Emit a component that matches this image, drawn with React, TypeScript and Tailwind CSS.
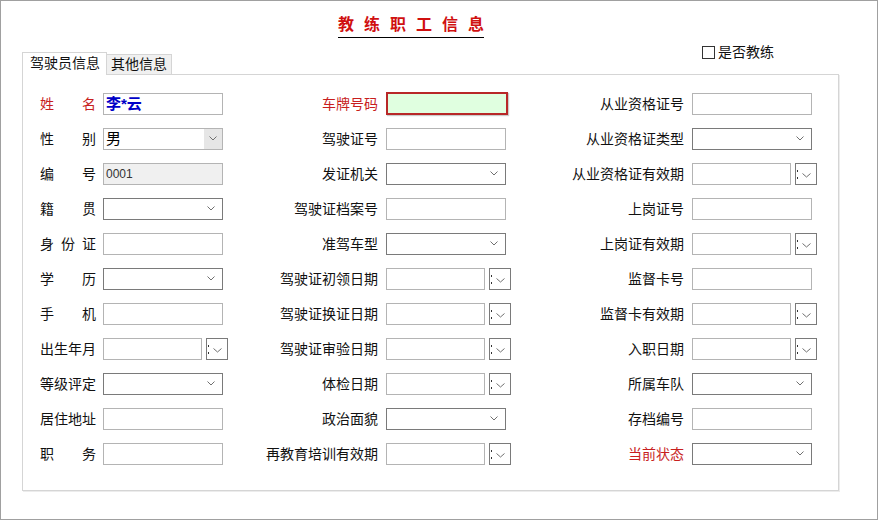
type Kind = "text" | "select" | "date" | "name" | "sex" | "code" | "plate";

type Field = { label: string; kind: Kind; red?: boolean };

const col1: Field[] = [
  { label: "姓名", kind: "name", red: true },
  { label: "性别", kind: "sex" },
  { label: "编号", kind: "code" },
  { label: "籍贯", kind: "select" },
  { label: "身份证", kind: "text" },
  { label: "学历", kind: "select" },
  { label: "手机", kind: "text" },
  { label: "出生年月", kind: "date" },
  { label: "等级评定", kind: "select" },
  { label: "居住地址", kind: "text" },
  { label: "职务", kind: "text" },
];

const col2: Field[] = [
  { label: "车牌号码", kind: "plate", red: true },
  { label: "驾驶证号", kind: "text" },
  { label: "发证机关", kind: "select" },
  { label: "驾驶证档案号", kind: "text" },
  { label: "准驾车型", kind: "select" },
  { label: "驾驶证初领日期", kind: "date" },
  { label: "驾驶证换证日期", kind: "date" },
  { label: "驾驶证审验日期", kind: "date" },
  { label: "体检日期", kind: "date" },
  { label: "政治面貌", kind: "select" },
  { label: "再教育培训有效期", kind: "date" },
];

const col3: Field[] = [
  { label: "从业资格证号", kind: "text" },
  { label: "从业资格证类型", kind: "select" },
  { label: "从业资格证有效期", kind: "date" },
  { label: "上岗证号", kind: "text" },
  { label: "上岗证有效期", kind: "date" },
  { label: "监督卡号", kind: "text" },
  { label: "监督卡有效期", kind: "date" },
  { label: "入职日期", kind: "date" },
  { label: "所属车队", kind: "select" },
  { label: "存档编号", kind: "text" },
  { label: "当前状态", kind: "select", red: true },
];

function Chevron() {
  return (
    <svg width="8" height="5" viewBox="0 0 8 5" className="shrink-0">
      <path d="M0.5 0.5 L4 4 L7.5 0.5" stroke="#707070" strokeWidth="1" fill="none" />
    </svg>
  );
}

function Input({ kind }: { kind: Kind }) {
  if (kind === "name")
    return (
      <div className="w-[120px] h-[22px] border border-[#b4b4b4] bg-white pl-[2px] text-[15px] leading-[20px] font-bold text-[#0000c8]">
        李*云
      </div>
    );
  if (kind === "sex")
    return (
      <div className="w-[120px] h-[22px] border border-[#b4b4b4] bg-white flex">
        <span className="flex-1 pl-[2px] text-[15px] leading-[20px] text-black">男</span>
        <span className="w-[18px] bg-[#e6e6e6] flex items-center justify-center">
          <Chevron />
        </span>
      </div>
    );
  if (kind === "code")
    return (
      <div className="w-[120px] h-[22px] border border-[#b4b4b4] bg-[#f0f0f0] pl-[2px] text-[12px] leading-[20px] text-[#333]">
        0001
      </div>
    );
  if (kind === "plate")
    return (
      <div className="w-[122px] h-[23px] border-2 border-[#b82828] bg-[#e0ffe0] shadow-[1px_1px_1px_rgba(0,0,0,0.2)]" />
    );
  if (kind === "select")
    return (
      <div className="w-[120px] h-[22px] border border-[#7a7a7a] bg-white flex items-center justify-end pr-[7px]">
        <Chevron />
      </div>
    );
  if (kind === "date")
    return (
      <div className="flex items-center gap-[4px]">
        <div className="w-[99px] h-[22px] border border-[#b4b4b4] bg-white" />
        <div className="w-[22px] h-[22px] border border-[#7a7a7a] bg-white">
          <svg width="20" height="20" viewBox="0 0 20 20">
            <rect x="1" y="6" width="1" height="2" fill="#333" />
            <rect x="1" y="13" width="1" height="2" fill="#333" />
            <path d="M6.5 9.5 L10.5 13 L14.5 9.5" stroke="#707070" strokeWidth="1" fill="none" />
          </svg>
        </div>
      </div>
    );
  return <div className="w-[120px] h-[22px] border border-[#b4b4b4] bg-white" />;
}

function Row1({ f }: { f: Field }) {
  return (
    <div className="h-[35px] flex items-center gap-[7px]">
      <div
        className={`w-[56px] flex justify-between text-[14px] leading-[22px] ${
          f.red ? "text-[#c81e1e]" : "text-[#111]"
        }`}
      >
        {f.label.split("").map((c, i) => (
          <span key={i}>{c}</span>
        ))}
      </div>
      <Input kind={f.kind} />
    </div>
  );
}

function Row({ f }: { f: Field }) {
  return (
    <div className="h-[35px] flex items-center gap-[8px]">
      <div
        className={`w-[118px] text-right text-[14px] leading-[22px] whitespace-nowrap ${
          f.red ? "text-[#c81e1e]" : "text-[#111]"
        }`}
      >
        {f.label}
      </div>
      <Input kind={f.kind} />
    </div>
  );
}

export default function App() {
  return (
    <div className="w-[880px] h-[520px] bg-white font-['Liberation_Sans','Noto_Sans_CJK_SC',sans-serif]">
      <div className="w-[878px] h-[520px] border border-[#a0a0a0] flex flex-col">
        {/* title */}
        <div className="h-[45px] pl-[337px] pt-[12px]">
          <div className="inline-flex gap-[10px] pb-[2px] border-b border-black text-[16px] leading-[20px] font-bold text-[#d01010]">
            {"教练职工信息".split("").map((c, i) => (
              <span key={i}>{c}</span>
            ))}
          </div>
        </div>

        {/* tabs + checkbox */}
        <div className="flex items-start pl-[21px] relative z-10 -mb-px">
          <div className="w-[680px] flex items-end pt-[6px] h-[29px]">
            <div className="h-[23px] w-[85px] border border-b-0 border-[#d5d5d5] bg-white text-[14px] leading-[21px] text-[#111] pl-[7px]">
              驾驶员信息
            </div>
            <div className="h-[21px] w-[65px] border border-l-0 border-[#d5d5d5] bg-[#f0f0f0] text-[14px] leading-[19px] text-[#111] pl-[4px]">
              其他信息
            </div>
          </div>
          <div className="flex items-center gap-[3px] -mt-[1px]">
            <span className="w-[13px] h-[13px] border border-[#333] bg-white" />
            <span className="text-[14px] leading-[14px] text-[#111]">是否教练</span>
          </div>
        </div>

        {/* panel */}
        <div className="ml-[21px] w-[817px] h-[417px] border border-[#d5d5d5] bg-white shadow-[1px_1px_0_#ececec] pt-[11px] pl-[17px] grid grid-cols-[220px_306px_auto]">
          <div>
            {col1.map((f) => (
              <Row1 key={f.label} f={f} />
            ))}
          </div>
          <div>
            {col2.map((f) => (
              <Row key={f.label} f={f} />
            ))}
          </div>
          <div>
            {col3.map((f) => (
              <Row key={f.label} f={f} />
            ))}
          </div>
        </div>
      </div>
    </div>
  );
}
